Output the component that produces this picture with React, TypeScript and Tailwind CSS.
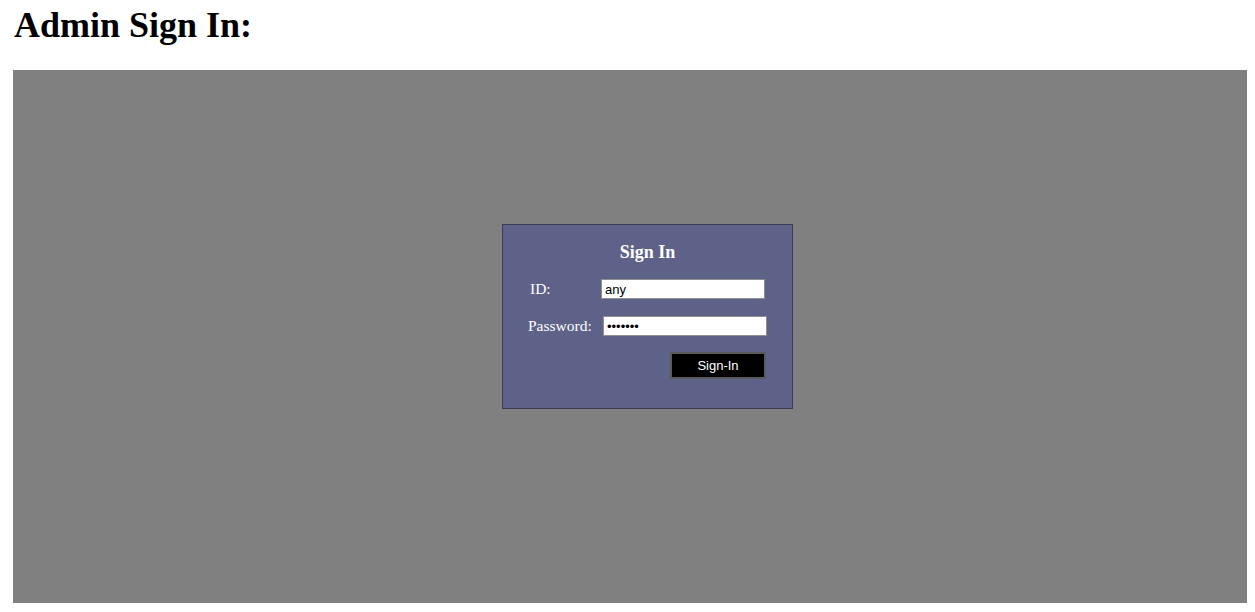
export default function App() {
  return (
    <div className="min-h-screen bg-white pl-[13px] pr-[8px] font-['Liberation_Serif',serif]">
      <h1 className="pt-[5px] pl-[1px] text-[36px] font-bold leading-[41px] text-black">Admin Sign In:</h1>

      <div className="mt-[24px] h-[533px] bg-[#808080] pt-[154px] pl-[489px]">
        <div className="w-[291px] h-[185px] border border-[#3b3d52] bg-[#5e6289] pt-[17px]">
          <h2 className="text-center text-[18px] font-bold leading-[21px] text-white">Sign In</h2>

          <div className="mt-[16px] flex items-center">
            <label className="ml-[27px] w-[71px] text-[15.5px] leading-[20px] text-white">ID:</label>
            <input
              type="text"
              defaultValue="any"
              className="h-[20px] w-[164px] border border-[#8f8f8f] bg-white px-[3px] font-['Liberation_Sans',sans-serif] text-[13px] text-black outline-none"
            />
          </div>

          <div className="mt-[17px] flex items-center">
            <label className="ml-[25px] w-[75px] text-[15.5px] leading-[20px] text-white">Password:</label>
            <input
              type="password"
              defaultValue="1234567"
              className="h-[20px] w-[164px] border border-[#8f8f8f] bg-white px-[3px] font-['Liberation_Sans',sans-serif] text-[13px] text-black outline-none"
            />
          </div>

          <div className="mt-[16px] pl-[167px]">
            <button className="h-[27px] w-[96px] border-2 border-[#5a5a5a] bg-black font-['Liberation_Sans',sans-serif] text-[13px] text-white">
              Sign-In
            </button>
          </div>
        </div>
      </div>
    </div>
  );
}
